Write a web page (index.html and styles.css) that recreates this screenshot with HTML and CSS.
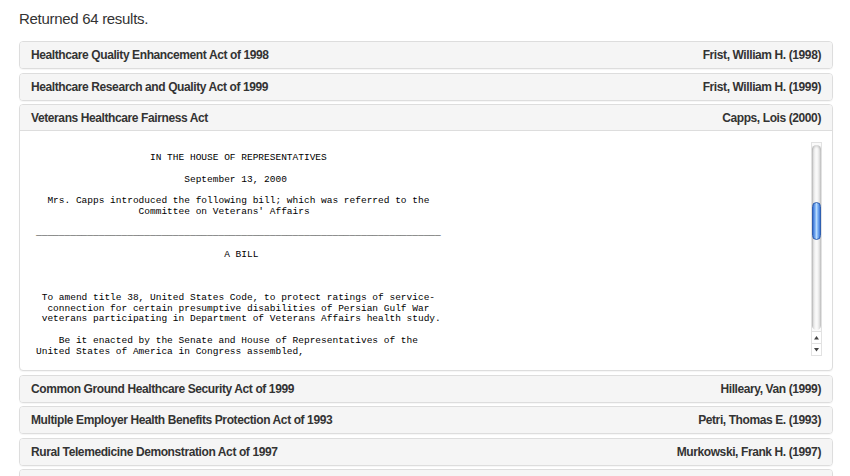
FILE: index.html
```html
<!DOCTYPE html>
<html lang="en">
<head>
<meta charset="utf-8">
<title>Results</title>
<link rel="stylesheet" href="styles.css">
</head>
<body>
<div class="page">
  <h4 class="count">Returned 64 results.</h4>
  <div class="panel-group">
    <div class="panel">
      <div class="panel-heading"><span>Healthcare Quality Enhancement Act of 1998</span><span>Frist, William H. (1998)</span></div>
    </div>
    <div class="panel">
      <div class="panel-heading"><span>Healthcare Research and Quality Act of 1999</span><span>Frist, William H. (1999)</span></div>
    </div>
    <div class="panel">
      <div class="panel-heading open"><span>Veterans Healthcare Fairness Act</span><span>Capps, Lois (2000)</span></div>
      <div class="panel-body">
<pre class="bill">                    IN THE HOUSE OF REPRESENTATIVES

                          September 13, 2000

  Mrs. Capps introduced the following bill; which was referred to the 
                  Committee on Veterans' Affairs

_______________________________________________________________________

                                 A BILL



 To amend title 38, United States Code, to protect ratings of service-
  connection for certain presumptive disabilities of Persian Gulf War 
 veterans participating in Department of Veterans Affairs health study.

    Be it enacted by the Senate and House of Representatives of the 
United States of America in Congress assembled,
</pre>
        <div class="scrollbar">
          <div class="track"><div class="thumb"></div></div>
          <div class="arrow"><svg width="9" height="9" viewBox="0 0 9 9"><path d="M2 6.5 L4.5 3 L7 6.5 Z" fill="#444"/></svg></div>
          <div class="arrow"><svg width="9" height="9" viewBox="0 0 9 9"><path d="M2 3 L4.5 6.5 L7 3 Z" fill="#444"/></svg></div>
        </div>
      </div>
    </div>
    <div class="panel">
      <div class="panel-heading"><span>Common Ground Healthcare Security Act of 1999</span><span>Hilleary, Van (1999)</span></div>
    </div>
    <div class="panel">
      <div class="panel-heading"><span>Multiple Employer Health Benefits Protection Act of 1993</span><span>Petri, Thomas E. (1993)</span></div>
    </div>
    <div class="panel">
      <div class="panel-heading"><span>Rural Telemedicine Demonstration Act of 1997</span><span>Murkowski, Frank H. (1997)</span></div>
    </div>
    <div class="panel">
      <div class="panel-heading"><span>&nbsp;</span><span>&nbsp;</span></div>
    </div>
  </div>
</div>
</body>
</html>
```
FILE: styles.css
```css
html, body {
  margin: 0;
  padding: 0;
  height: 476px;
  overflow: hidden;
  background: #fff;
}
body {
  font-family: "Liberation Sans", Arial, sans-serif;
  color: #333;
}
.page {
  padding: 10px 17px 0 19px;
}
.count {
  margin: 0 0 13px 0;
  font-size: 15px;
  line-height: 18px;
  font-weight: normal;
  letter-spacing: -0.3px;
  color: #333;
}
.panel-group {
  display: flex;
  flex-direction: column;
  gap: 3.5px;
}
.panel {
  border: 1px solid #ddd;
  border-radius: 4px;
  background: #fff;
  overflow: hidden;
  box-shadow: 0 1px 1px rgba(0,0,0,0.04);
}
.panel-heading {
  display: flex;
  justify-content: space-between;
  background: #f5f5f5;
  padding: 6px 11px;
  height: 14px;
  font-size: 12px;
  line-height: 14px;
  font-weight: bold;
  letter-spacing: -0.4px;
  color: #333;
}
.panel-heading.open {
  height: 13px;
  border-bottom: 1px solid #ddd;
}
.panel-body {
  display: flex;
  padding: 11px 10px 14px 10px;
}
.bill {
  flex: 1;
  margin: 0;
  height: 203px;
  overflow: hidden;
  padding: 11px 0 0 6px;
  font-family: "Liberation Mono", "Courier New", monospace;
  font-size: 9.5px;
  line-height: 10.77px;
  color: #000;
}
.scrollbar {
  width: 11px;
  height: 214px;
  display: flex;
  flex-direction: column;
  border: 1px solid #e2e2e2;
  box-sizing: border-box;
  background: #fafafa;
}
.track {
  flex: 1;
  margin: 2px 0 1px 0;
  border-radius: 5px;
  background: linear-gradient(to right, #bdbdbd 0%, #e6e6e6 20%, #fbfbfb 45%, #f4f4f4 65%, #dcdcdc 85%, #c4c4c4 100%);
  box-shadow: inset 0 2px 2px rgba(0,0,0,0.12);
  padding-top: 57px;
  box-sizing: border-box;
}
.thumb {
  height: 38px;
  border-radius: 5px;
  border: 1px solid #2f5fb0;
  box-sizing: border-box;
  background: linear-gradient(to right, #3b6fd0 0%, #6aa3ef 25%, #b8dafd 50%, #7cb3f5 70%, #3d74d4 100%);
}
.arrow {
  height: 11px;
  display: flex;
  align-items: center;
  justify-content: center;
  border-top: 1px solid #e0e0e0;
  background: #fff;
}
.arrow svg {
  display: block;
}
```
